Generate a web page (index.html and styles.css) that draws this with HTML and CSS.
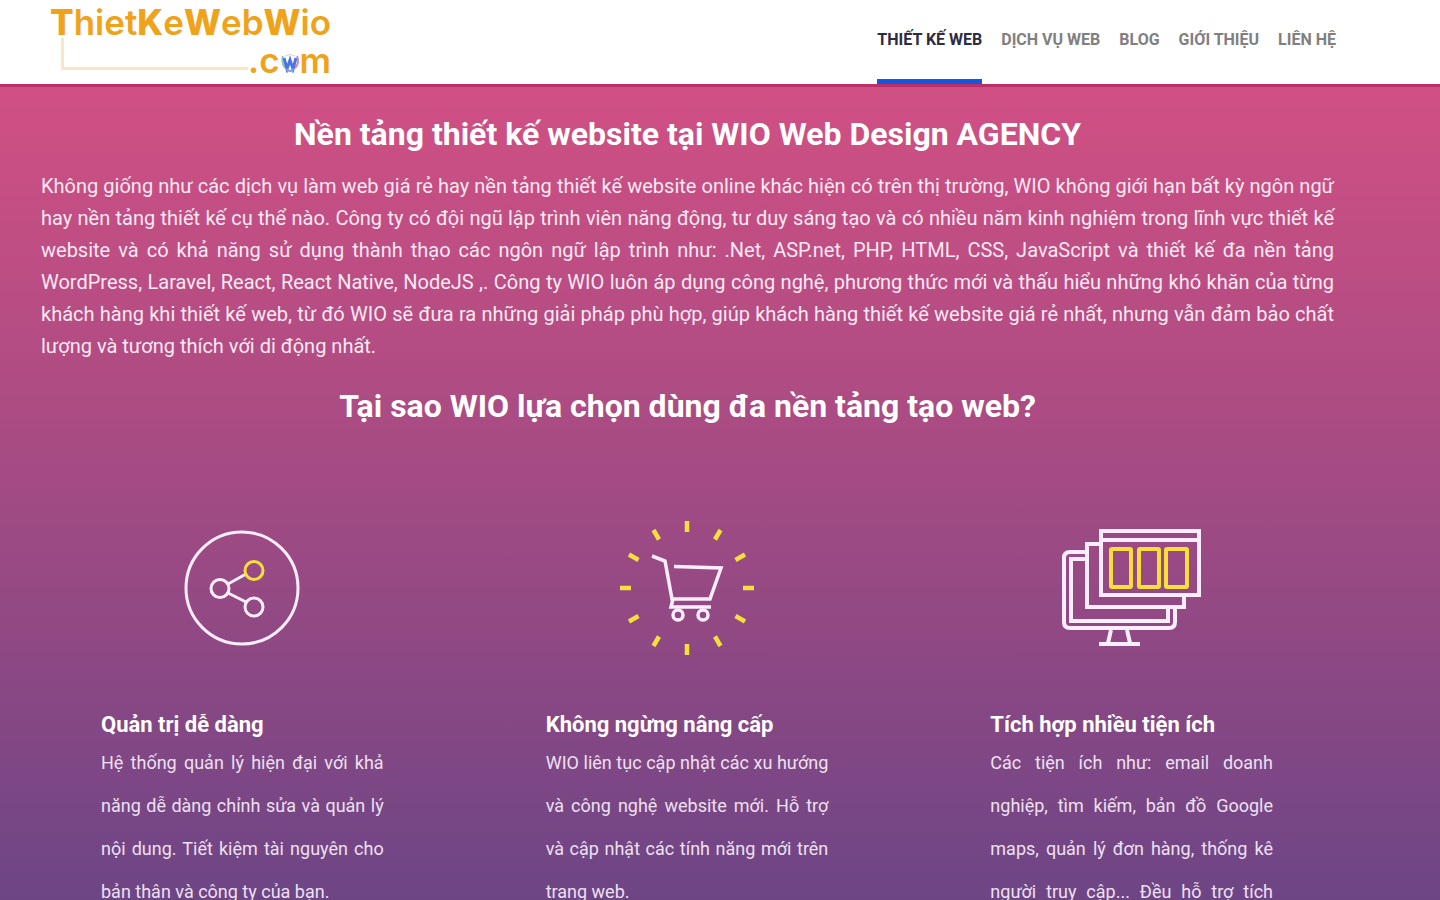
FILE: index.html
```html
<!DOCTYPE html>
<html lang="vi">
<head>
<meta charset="utf-8">
<title>ThietKeWebWio.com</title>
<link rel="stylesheet" href="styles.css">
</head>
<body>
<header class="header">
  <a class="logo" href="#" aria-label="ThietKeWebWio.com">
    <span class="logo-name"><b>T</b>hiet<b>K</b>e<b>W</b>eb<b>W</b>io</span>
    <span class="logo-row">
      <span class="logo-line"></span>
      <span class="logo-com">.c<svg class="logo-mark" viewBox="0 0 20 20" aria-hidden="true"><path d="M3 3Q1 10 5 15" fill="none" stroke="#8fc9b4" stroke-width="2"/><path d="M5 3Q10 0 15 3" fill="none" stroke="#f3c9cd" stroke-width="1"/><path d="M17 3Q20 10 15 15" fill="none" stroke="#d98cab" stroke-width="2"/><path d="M4 5L7 16L10 7L13 16L16 5" fill="none" stroke="#4b76e2" stroke-width="3"/><path d="M6 16Q10 20 14 16" fill="none" stroke="#7f9cec" stroke-width="2"/></svg>m</span>
    </span>
  </a>
  <nav class="nav">
    <a class="nav-link active" href="#">THIẾT KẾ WEB</a>
    <a class="nav-link" href="#">DỊCH VỤ WEB</a>
    <a class="nav-link" href="#">BLOG</a>
    <a class="nav-link" href="#">GIỚI THIỆU</a>
    <a class="nav-link" href="#">LIÊN HỆ</a>
  </nav>
</header>
<main class="hero">
  <section class="intro">
    <h1 class="title">Nền tảng thiết kế website tại WIO Web Design AGENCY</h1>
    <p class="lead">Không giống như các dịch vụ làm web giá rẻ hay nền tảng thiết kế website online khác hiện có trên thị trường, WIO không giới hạn bất kỳ ngôn ngữ hay nền tảng thiết kế cụ thể nào. Công ty có đội ngũ lập trình viên năng động, tư duy sáng tạo và có nhiều năm kinh nghiệm trong lĩnh vực thiết kế website và có khả năng sử dụng thành thạo các ngôn ngữ lập trình như: .Net, ASP.net, PHP, HTML, CSS, JavaScript và thiết kế đa nền tảng WordPress, Laravel, React, React Native, NodeJS ,. Công ty WIO luôn áp dụng công nghệ, phương thức mới và thấu hiểu những khó khăn của từng khách hàng khi thiết kế web, từ đó WIO sẽ đưa ra những giải pháp phù hợp, giúp khách hàng thiết kế website giá rẻ nhất, nhưng vẫn đảm bảo chất lượng và tương thích với di động nhất.</p>
    <h2 class="title">Tại sao WIO lựa chọn dùng đa nền tảng tạo web?</h2>
  </section>
  <section class="features">
    <article class="feature">
      <svg class="icon" viewBox="0 0 150 150" fill="none" stroke="#fbeefa" stroke-width="3" aria-hidden="true">
        <circle cx="75" cy="75" r="56"/>
        <path d="M61 71L79 61M61 80L79 89"/>
        <circle cx="53" cy="75.500" r="9"/>
        <circle cx="87" cy="94" r="9"/>
        <circle cx="87" cy="57.500" r="9" stroke="#f4df3c"/>
      </svg>
      <h3 class="feature-title">Quản trị dễ dàng</h3>
      <p class="feature-text">Hệ thống quản lý hiện đại với khả năng dễ dàng chỉnh sửa và quản lý nội dung. Tiết kiệm tài nguyên cho bản thân và công ty của bạn.</p>
    </article>
    <article class="feature">
      <svg class="icon" viewBox="0 0 150 150" fill="none" stroke="#fbeefa" stroke-width="3.500" aria-hidden="true">
        <g stroke="#f4df3c" stroke-width="4.500">
          <path d="M75 8V19M75 131V142M8 75H19M131 75H142"/>
          <path d="M41.500 17L47 26.500M103 123.500L108.500 133M17 41.500L26.500 47M123.500 103L133 108.500"/>
          <path d="M108.500 17L103 26.500M47 123.500L41.500 133M133 41.500L123.500 47M26.500 103L17 108.500"/>
        </g>
        <path d="M40 43L53 48L60 86H98L109 55L62 53.500"/>
        <path d="M61 86L59 94H99"/>
        <circle cx="66" cy="102" r="5"/>
        <circle cx="91" cy="102" r="5"/>
      </svg>
      <h3 class="feature-title">Không ngừng nâng cấp</h3>
      <p class="feature-text">WIO liên tục cập nhật các xu hướng và công nghệ website mới. Hỗ trợ và cập nhật các tính năng mới trên trang web.</p>
    </article>
    <article class="feature">
      <svg class="icon" viewBox="0 0 150 150" fill="none" stroke="#fbeefa" stroke-width="4" aria-hidden="true">
        <path d="M30 39H13Q7 39 7 45V109Q7 115 13 115H112Q118 115 118 109V94"/>
        <path d="M30 46H14V108H111V94"/>
        <path d="M44 31H30V94H127V83"/>
        <path d="M44 18H142V82H44ZM44 27H142"/>
        <path d="M54 117L51 130M70 117L73 130M42 131H83"/>
        <g stroke="#f4df3c"><rect x="54" y="36" width="20" height="38" rx="1"/><rect x="82" y="36" width="20" height="38" rx="1"/><rect x="109" y="36" width="21" height="38" rx="1"/></g>
      </svg>
      <h3 class="feature-title">Tích hợp nhiều tiện ích</h3>
      <p class="feature-text">Các tiện ích như: email doanh nghiệp, tìm kiếm, bản đồ Google maps, quản lý đơn hàng, thống kê người truy cập... Đều hỗ trợ tích</p>
    </article>
  </section>
</main>
</body>
</html>
```
FILE: styles.css
```css
* { box-sizing: border-box; }
body {
  margin: 0;
  height: 100vh;
  display: flex;
  flex-direction: column;
  overflow: hidden;
  font-family: Roboto, "Noto Sans", sans-serif;
  color: #fff;
}
.header {
  display: flex;
  flex: none;
  justify-content: space-between;
  height: 84px;
  padding: 0 104px 0 50px;
  background: #fff;
}
.logo {
  display: flex;
  flex-direction: column;
  padding-top: 3px;
  color: #efa31b;
  font-family: Inter, sans-serif;
  font-size: 35px;
  font-weight: 600;
  line-height: 38px;
  text-decoration: none;
}
.logo-name b { font-weight: 800; }
.logo-row { display: flex; }
.logo-line {
  flex: 1;
  height: 32px;
  margin: -3px 0 0 11px;
  border: solid #fbe6c3;
  border-width: 0 0 3px 3px;
}
.logo-mark { width: 20px; height: 20px; }
.nav { display: flex; gap: 19px; }
.nav-link {
  border-bottom: 5px solid transparent;
  color: #808080;
  font-size: 16px;
  font-weight: 700;
  line-height: 80px;
  text-decoration: none;
}
.nav-link.active { color: #2c2c44; border-color: #1656dd; }
.hero {
  flex: 1;
  min-height: 0;
  overflow: hidden;
  padding: 29px 86px 0 20px;
  border-top: 3px solid #bb3069;
  background: linear-gradient(#d15083, #a64b83 46%, #6d4585);
}
.intro { padding: 0 20px 0 21px; }
.title {
  margin: 0;
  font-size: 32px;
  font-weight: 700;
  line-height: 36px;
  text-align: center;
}
.lead {
  margin: 18px 0 26px;
  color: #fbe8f2;
  font-size: 20px;
  line-height: 32px;
  text-align: justify;
}
.features { display: grid; grid-template-columns: repeat(3, 1fr); }
.feature { display: flex; flex-direction: column; padding: 89px 81px 0; }
.icon { align-self: center; width: 150px; height: 150px; }
.feature-title { margin: 48px 0 0; font-size: 22px; line-height: 28px; }
.feature-text {
  margin: 2px 0 0;
  color: #eee0f0;
  font-size: 18px;
  line-height: 43px;
  text-align: justify;
}
.feature:last-child .feature-text { text-align-last: justify; }
```
